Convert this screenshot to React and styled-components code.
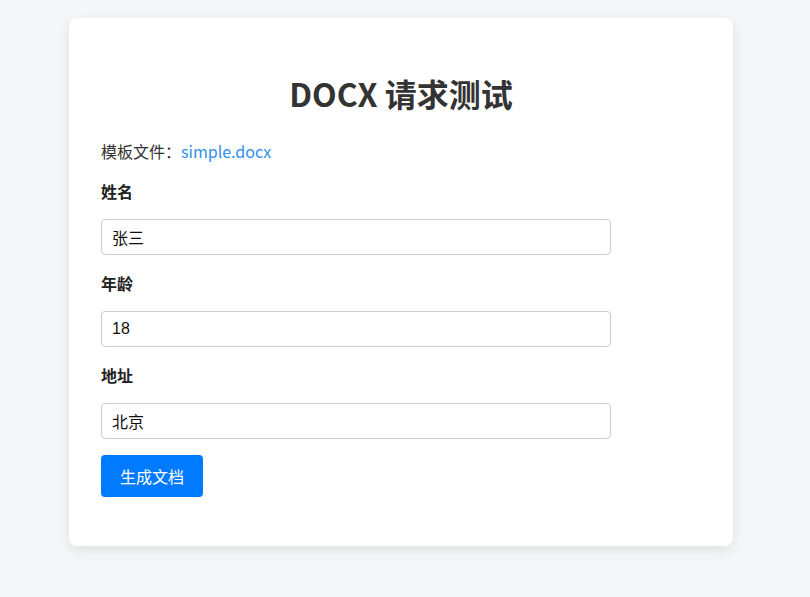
import React, { useState } from "react";
import styled, { createGlobalStyle } from "styled-components";

const GlobalStyle = createGlobalStyle`
  html, body {
    margin: 0;
    padding: 0;
    background: #f5f6f7;
  }
  body {
    font-family: "Noto Sans CJK SC", "Noto Sans", sans-serif;
    color: #333;
  }
`;

const Page = styled.div`
  padding: 18px 8px 40px 0;
  min-height: 597px;
  box-sizing: border-box;
`;

const Card = styled.div`
  width: 600px;
  margin: 0 auto;
  padding: 32px;
  background: #fff;
  border-radius: 8px;
  box-shadow: 0 4px 14px rgba(0, 0, 0, 0.09);
`;

const Title = styled.h1`
  margin: 20px 0 23px;
  text-align: center;
  font-size: 32px;
  line-height: 46px;
  font-weight: 700;
  color: #333;
`;

const Template = styled.p`
  margin: 0 0 16px;
  font-size: 16px;
  line-height: 24px;
  color: #333;
`;

const FileLink = styled.a`
  color: #2f8fee;
  text-decoration: none;
`;

const Form = styled.form`
  display: flex;
  flex-direction: column;
  align-items: flex-start;
  padding-bottom: 17px;
`;

const Field = styled.div`
  display: flex;
  flex-direction: column;
  margin-bottom: 16px;
`;

const Label = styled.label`
  font-size: 16px;
  line-height: 24px;
  font-weight: 700;
  color: #222;
  margin-bottom: 16px;
`;

const Input = styled.input`
  width: 510px;
  height: 36px;
  box-sizing: border-box;
  padding: 0 10px;
  font-size: 16px;
  font-family: "Liberation Sans", "Noto Sans CJK SC", sans-serif;
  color: #111;
  border: 1px solid #ccc;
  border-radius: 4px;
  outline: none;
`;

const Submit = styled.button`
  height: 42px;
  padding: 0 19px;
  font-size: 16px;
  font-family: "Noto Sans CJK SC", sans-serif;
  color: #fff;
  background: #007bff;
  border: none;
  border-radius: 4px;
  cursor: pointer;
`;

function App() {
  const [form, setForm] = useState({ name: "张三", age: "18", address: "北京" });
  const handleChange = e => setForm({ ...form, [e.target.name]: e.target.value });
  const handleSubmit = e => e.preventDefault();

  return (
    <Page>
      <GlobalStyle />
      <Card>
        <Title>DOCX 请求测试</Title>
        <Template>
          模板文件：<FileLink href="#">simple.docx</FileLink>
        </Template>
        <Form onSubmit={handleSubmit}>
          <Field>
            <Label htmlFor="name">姓名</Label>
            <Input id="name" name="name" value={form.name} onChange={handleChange} />
          </Field>
          <Field>
            <Label htmlFor="age">年龄</Label>
            <Input id="age" name="age" value={form.age} onChange={handleChange} />
          </Field>
          <Field>
            <Label htmlFor="address">地址</Label>
            <Input id="address" name="address" value={form.address} onChange={handleChange} />
          </Field>
          <Submit type="submit">生成文档</Submit>
        </Form>
      </Card>
    </Page>
  );
}

export default App;
